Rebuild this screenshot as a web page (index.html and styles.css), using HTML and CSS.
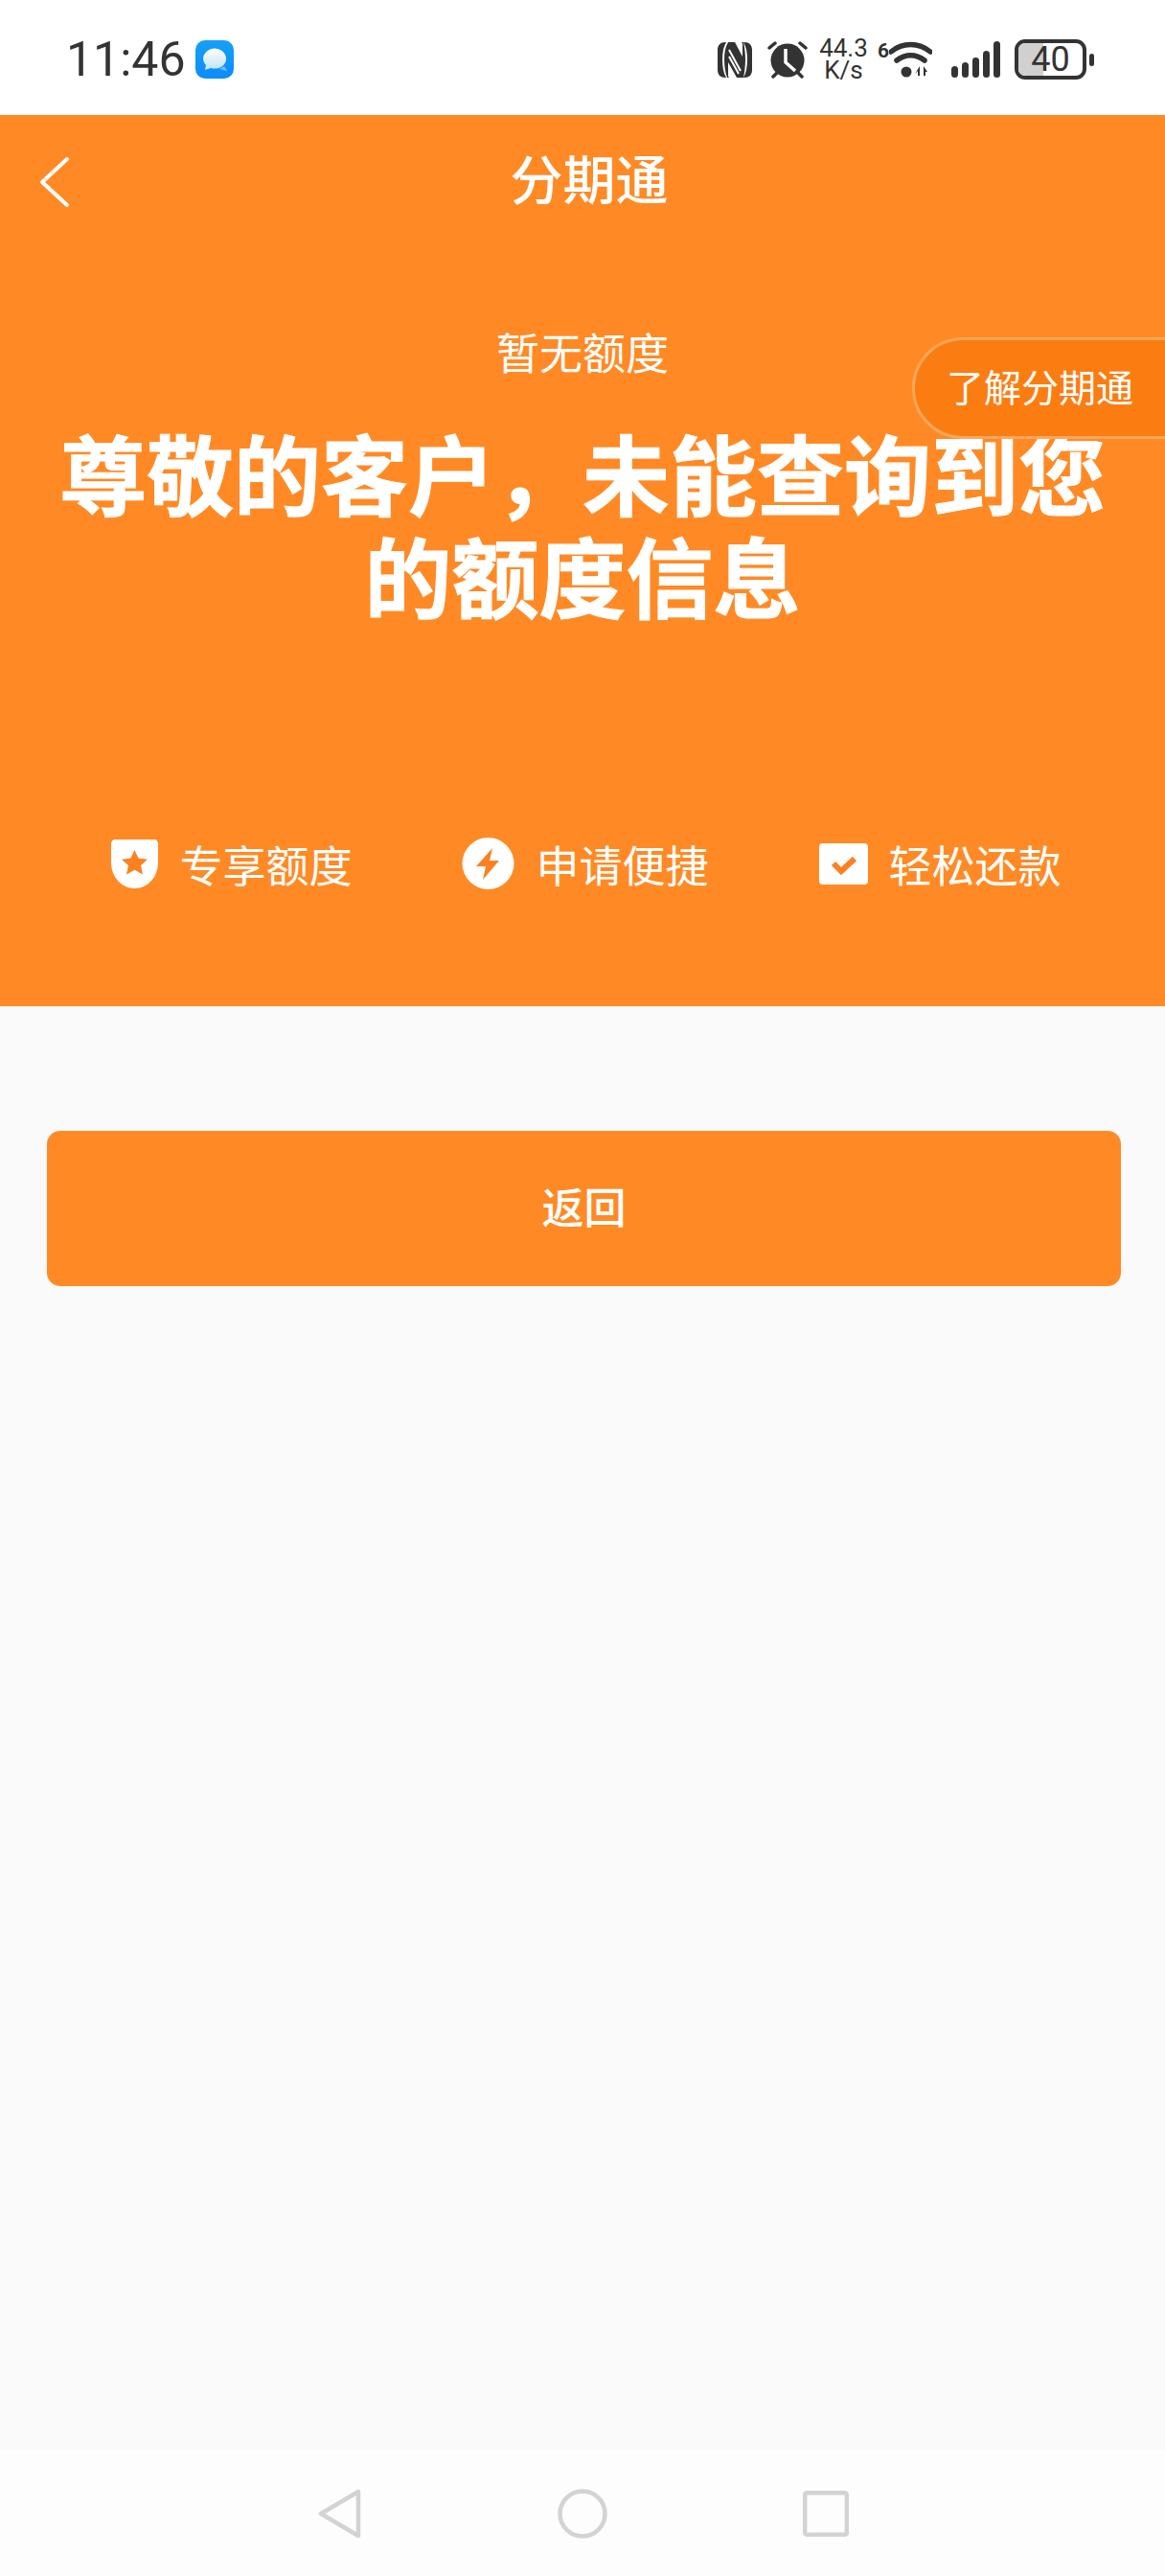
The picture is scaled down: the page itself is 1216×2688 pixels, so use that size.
FILE: index.html
```html
<!DOCTYPE html>
<html lang="zh-CN">
<head>
    <meta charset="UTF-8">
    <meta name="viewport" content="width=device-width, initial-scale=1.0">
    <title>分期通</title>
    <link rel="stylesheet" href="styles.css">
</head>
<body>

<div class="phone">

    <div class="status-bar">
        <div class="status-left">
            <span class="time">11:46</span>
            <svg class="msg-icon" width="40" height="40" viewBox="0 0 40 40">
                <defs>
                    <linearGradient id="msgBg" x1="0" y1="0" x2="0" y2="1">
                        <stop offset="0" stop-color="#16a0f5"/>
                        <stop offset="1" stop-color="#0c8cfb"/>
                    </linearGradient>
                    <linearGradient id="msgBubble" x1="0" y1="0" x2="0" y2="1">
                        <stop offset="0" stop-color="#ffffff"/>
                        <stop offset="1" stop-color="#bfe3f6"/>
                    </linearGradient>
                </defs>
                <rect width="40" height="40" rx="10" fill="url(#msgBg)"/>
                <path d="M30 27l3 5-8-2z" fill="#6cc0f5"/>
                <path d="M10 31l1-5a12 10.500 0 1 1 5 3z" fill="url(#msgBubble)"/>
            </svg>
        </div>
        <div class="status-right">
            <svg class="nfc-icon" width="36" height="37" viewBox="0 0 36 37">
                <path d="M8 0h1c-3 5-4 11-4 18s1 14 4 19H8c-5 0-8-3-8-8V8c0-5 3-8 8-8zM28 0c5 0 8 3 8 8v21c0 5-3 8-8 8h-1c3-5 4-12 4-19S30 5 27 0z" fill="#333"/>
                <path d="M11 0h7l8 15V3c0-1 0-2-1-3h2c1 5 2 11 2 18s-1 14-2 19h-7l-9-16v13c0 1 0 2 1 3H10C8 32 7 25 7 18S8 5 11 0z" fill="#333"/>
                <path d="M12 8l12 22M12 15l10 18" stroke="#fff" stroke-width="2" fill="none"/>
            </svg>
            <svg class="alarm-icon" width="42" height="40" viewBox="0 0 42 40">
                <circle cx="21" cy="21" r="17.500" fill="#333"/>
                <path d="M2 8l6-5M40 8l-6-5M6 38l4-4M36 38l-4-4" stroke="#333" stroke-width="3.500" stroke-linecap="round"/>
                <path d="M19 9v14l10 9" stroke="#fff" stroke-width="3.500" fill="none"/>
            </svg>
            <div class="net-speed">44.3<br>K/s</div>
            <div class="wifi">
                <span class="wifi-six">6</span>
                <svg width="45" height="42" viewBox="0 0 45 42">
                    <path d="M2 13c12-10 29-10 41 0M8 22c9-7 20-7 29 0" stroke="#333" stroke-width="5.500" stroke-linecap="round" fill="none"/>
                    <circle cx="18" cy="34" r="5.500" fill="#333"/>
                    <path d="M32 28v10h-2v-5l-3 3zM36 28l4 6h-2v4h-2z" fill="#333"/>
                </svg>
            </div>
            <div class="signal">
                <i class="bar-1"></i>
                <i class="bar-2"></i>
                <i class="bar-3"></i>
                <i class="bar-4"></i>
                <i class="bar-5"></i>
            </div>
            <div class="battery">
                <div class="battery-body">
                    <div class="battery-fill"></div>
                    <span class="battery-num">40</span>
                </div>
                <div class="battery-tip"></div>
            </div>
        </div>
    </div>

    <div class="hero">
        <div class="nav">
            <svg class="back" width="34" height="54" viewBox="0 0 34 54">
                <path d="M30 3L4 27l26 24" stroke="#fff" stroke-width="4" stroke-linecap="round" stroke-linejoin="round" fill="none"/>
            </svg>
            <h1 class="nav-title">分期通</h1>
        </div>

        <a class="learn-more">了解分期通</a>

        <p class="sub">暂无额度</p>
        <h2 class="headline">尊敬的客户，未能查询到您的额度信息</h2>

        <div class="features">
            <div class="feature">
                <svg width="49" height="51" viewBox="0 0 49 51">
                    <path d="M4 0h41c2 0 4 2 4 4v20c0 15-11 27-24.500 27S0 39 0 24V4c0-2 2-4 4-4z" fill="#fff"/>
                    <path d="M24.500 11l4 8.500 9.500 1.200-7 6.300 2 9.500-8.500-4.800L16 36.500l2-9.500-7-6.300 9.500-1.200z" fill="#fb8122"/>
                </svg>
                <span>专享额度</span>
            </div>
            <div class="feature">
                <svg width="55" height="54" viewBox="0 0 55 54">
                    <circle cx="27.500" cy="27" r="27" fill="#fff"/>
                    <path d="M32 11L15 30h10l-3 14 17-20H29z" fill="#fb8122"/>
                </svg>
                <span>申请便捷</span>
            </div>
            <div class="feature">
                <svg width="51" height="43" viewBox="0 0 51 43">
                    <rect width="51" height="43" rx="4" fill="#fff"/>
                    <path d="M15 21l8 8 14-13" stroke="#fb8122" stroke-width="6" fill="none"/>
                </svg>
                <span>轻松还款</span>
            </div>
        </div>
    </div>

    <div class="content">
        <button class="back-btn">返回</button>
    </div>

    <div class="nav-bar">
        <svg width="46" height="52" viewBox="0 0 46 52">
            <path d="M42 3L3 26l39 23z" stroke="#d3d3d3" stroke-width="4.500" stroke-linejoin="round" fill="none"/>
        </svg>
        <svg width="52" height="52" viewBox="0 0 52 52">
            <circle cx="26" cy="26" r="23.500" stroke="#d3d3d3" stroke-width="4.500" fill="none"/>
        </svg>
        <svg width="48" height="48" viewBox="0 0 48 48">
            <rect x="2.200" y="2.200" width="43.600" height="43.600" rx="2" stroke="#d3d3d3" stroke-width="4.500" fill="none"/>
        </svg>
    </div>

</div>

</body>
</html>
```

FILE: styles.css
```css
* {
    box-sizing: border-box;
}
body {
    margin: 0;
    font-family: "Noto Sans CJK SC", "Noto Sans", sans-serif;
}
.phone {
    width: 1216px;
    height: 2688px;
    display: flex;
    flex-direction: column;
    background: #fafafa;
}

/* status bar */
.status-bar {
    height: 120px;
    flex: none;
    background: #fff;
    display: flex;
    justify-content: space-between;
    align-items: center;
    padding: 4px 74px 0 69px;
    color: #333;
}
.status-left {
    display: flex;
    align-items: center;
    gap: 10px;
}
.time {
    font-family: Roboto, sans-serif;
    font-size: 50px;
    line-height: 60px;
}
.status-right {
    display: flex;
    align-items: center;
}
.nfc-icon {
    margin-right: 16px;
}
.alarm-icon {
    margin-right: 12px;
}
.net-speed {
    width: 51px;
    margin-right: 10px;
    text-align: center;
    font-family: Roboto, sans-serif;
    font-size: 26px;
    line-height: 23px;
}
.wifi {
    display: flex;
    align-items: flex-start;
    margin-right: 20px;
}
.wifi-six {
    font-family: Roboto, sans-serif;
    font-size: 21px;
    font-weight: 700;
    line-height: 24px;
    width: 12px;
}
.signal {
    display: flex;
    align-items: flex-end;
    gap: 4px;
    height: 38px;
    margin-right: 15px;
}
.signal i {
    width: 7px;
    border-radius: 4px;
    background: #333;
}
.bar-1 { height: 12px; }
.bar-2 { height: 16px; }
.bar-3 { height: 21px; }
.bar-4 { height: 28px; }
.bar-5 { height: 38px; }
.battery {
    display: flex;
    align-items: center;
    gap: 3px;
}
.battery-body {
    position: relative;
    width: 75px;
    height: 42px;
    border: 4px solid #333;
    border-radius: 11px;
    overflow: hidden;
    display: flex;
    align-items: center;
    justify-content: center;
}
.battery-fill {
    position: absolute;
    left: 0;
    top: 0;
    bottom: 0;
    width: 26px;
    background: #d0d0d0;
}
.battery-num {
    position: relative;
    font-family: Roboto, sans-serif;
    font-size: 36px;
    line-height: 34px;
}
.battery-tip {
    width: 5px;
    height: 13px;
    border-radius: 3px;
    background: #333;
}

/* orange header */
.hero {
    position: relative;
    height: 930px;
    flex: none;
    background: #ff8a25;
    color: #fff;
    text-align: center;
}
.nav {
    position: relative;
    height: 120px;
    display: flex;
    align-items: center;
    justify-content: center;
    padding: 8px 0 0 14px;
}
.back {
    position: absolute;
    left: 40px;
    top: 43px;
}
.nav-title {
    margin: 0;
    font-size: 55px;
    font-weight: 500;
    line-height: 80px;
}
.learn-more {
    position: absolute;
    right: -3px;
    top: 232px;
    width: 267px;
    height: 106px;
    line-height: 94px;
    padding-left: 33px;
    text-align: left;
    font-size: 39px;
    background: #fb7d12;
    border: 3px solid #fda75c;
    border-radius: 53px 0 0 53px;
}
.sub {
    margin: 97px 0 0;
    font-size: 45px;
    line-height: 60px;
}
.headline {
    margin: 41px 40px 0;
    font-size: 91px;
    font-weight: 700;
    line-height: 107px;
    -webkit-text-stroke: 1px #fff;
}
.features {
    display: flex;
    justify-content: center;
    gap: 115px;
    margin-top: 222px;
    padding-left: 8px;
}
.feature {
    display: flex;
    align-items: center;
    gap: 22px;
    height: 54px;
    font-size: 45px;
}

/* body */
.content {
    flex: 1;
    padding: 130px 46px 0 49px;
}
.back-btn {
    display: block;
    width: 100%;
    height: 162px;
    padding: 0 0 6px;
    border: none;
    border-radius: 14px;
    background: #ff8a25;
    color: #fff;
    font-family: inherit;
    font-size: 44px;
    font-weight: 500;
}

/* android nav */
.nav-bar {
    height: 131px;
    flex: none;
    background: #fdfdfd;
    display: flex;
    align-items: center;
    padding-left: 332px;
    gap: 204px;
}
```
